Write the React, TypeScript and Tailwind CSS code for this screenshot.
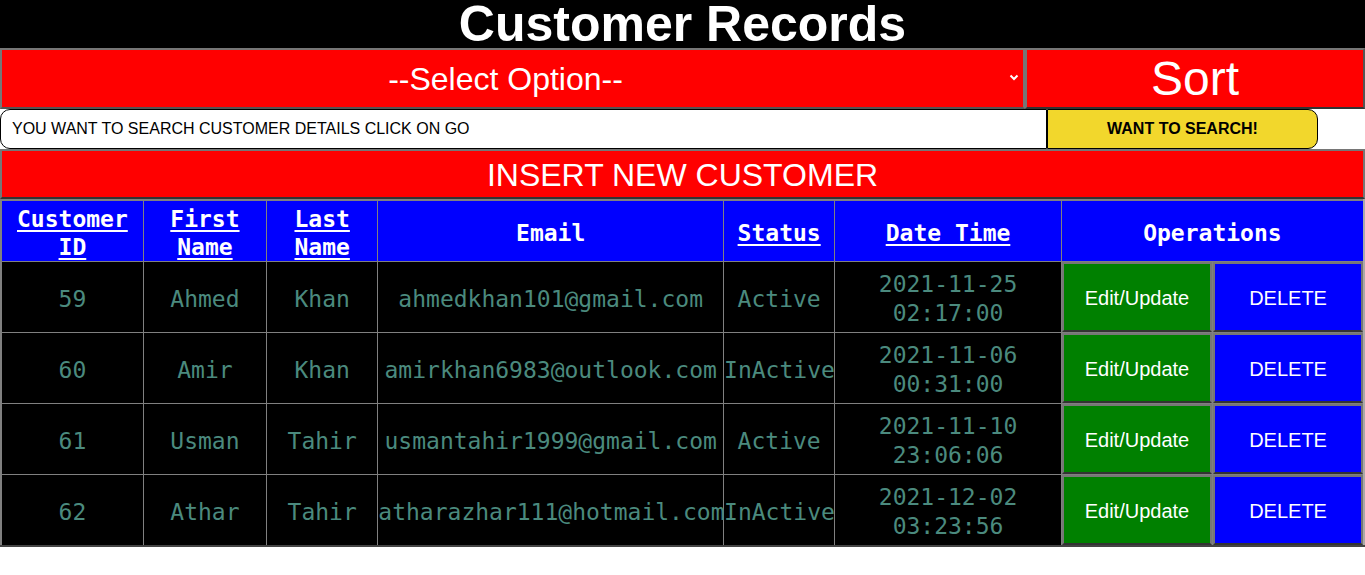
import { useState } from "react";

interface Customer {
  id: number;
  first: string;
  last: string;
  email: string;
  status: string;
  date: string;
  time: string;
}

const customers: Customer[] = [
  { id: 59, first: "Ahmed", last: "Khan", email: "ahmedkhan101@gmail.com", status: "Active", date: "2021-11-25", time: "02:17:00" },
  { id: 60, first: "Amir", last: "Khan", email: "amirkhan6983@outlook.com", status: "InActive", date: "2021-11-06", time: "00:31:00" },
  { id: 61, first: "Usman", last: "Tahir", email: "usmantahir1999@gmail.com", status: "Active", date: "2021-11-10", time: "23:06:06" },
  { id: 62, first: "Athar", last: "Tahir", email: "atharazhar111@hotmail.com", status: "InActive", date: "2021-12-02", time: "03:23:56" },
];

const arial = "font-['Liberation_Sans',Arial,sans-serif]";
const mono = "font-['DejaVu_Sans_Mono','Liberation_Mono',monospace]";

function HeadLink({ children }: { children: React.ReactNode }) {
  return (
    <a href="#" className="underline decoration-2 underline-offset-[3px] text-white">
      {children}
    </a>
  );
}

export default function App() {
  const [sortBy, setSortBy] = useState("");

  return (
    <div className={`${arial} bg-white min-h-[575px]`}>
      <h1 className="bg-black text-white text-center font-bold text-[50px] leading-[48px] h-[48px]">
        Customer Records
      </h1>

      <div className="flex h-[61px]">
        <div className="relative w-[1025px]">
          <select
            value={sortBy}
            onChange={(e) => setSortBy(e.target.value)}
            className="appearance-none w-full h-full bg-[#ff0000] text-white text-[32px] [text-align-last:center] pr-[14px] border-2 border-[#767676] border-b-[#555] outline-none"
          >
            <option value="">--Select Option--</option>
            <option value="id">Customer ID</option>
            <option value="first">First Name</option>
            <option value="last">Last Name</option>
          </select>
          <svg
            className="absolute right-[6px] top-[26px] pointer-events-none"
            width="10"
            height="7"
            viewBox="0 0 10 7"
            fill="none"
            stroke="white"
            strokeWidth="2"
          >
            <path d="M1.5 1.5 L5 5 L8.5 1.5" />
          </svg>
        </div>
        <button className="flex-1 bg-[#ff0000] text-white text-[48px] leading-none border-2 border-[#767676] border-b-[#333] border-r-[#555]">
          Sort
        </button>
      </div>

      <div className="flex h-[40px]">
        <input
          placeholder="YOU WANT TO SEARCH CUSTOMER DETAILS CLICK ON GO"
          className="w-[1047px] h-full border border-black rounded-l-[10px] pl-[11px] text-[16px] placeholder:text-black outline-none"
        />
        <button className="w-[271px] h-full bg-[#f2d72c] border border-black rounded-r-[10px] font-bold text-[16px] text-black">
          WANT TO SEARCH!
        </button>
      </div>

      <button className="block w-full h-[50px] bg-[#ff0000] text-white text-[32px] border-2 border-[#767676] border-b-[#333]">
        INSERT NEW CUSTOMER
      </button>

      <table className={`${mono} w-full table-fixed border-collapse border-2 border-[#808080] border-b-[#444] border-r-[#aaa]`}>
        <colgroup>
          <col className="w-[142px]" />
          <col className="w-[123px]" />
          <col className="w-[111px]" />
          <col className="w-[345px]" />
          <col className="w-[111px]" />
          <col className="w-[226px]" />
          <col className="w-[151px]" />
          <col className="w-[151px]" />
        </colgroup>
        <thead>
          <tr className="h-[60px] bg-[#0000ff] text-white font-bold text-[23px] leading-[28px]">
            <th className="border border-[#808080] pt-[4px]"><HeadLink>Customer<br />ID</HeadLink></th>
            <th className="border border-[#808080] pt-[4px]"><HeadLink>First<br />Name</HeadLink></th>
            <th className="border border-[#808080] pt-[4px]"><HeadLink>Last<br />Name</HeadLink></th>
            <th className="border border-[#808080] pt-[4px]">Email</th>
            <th className="border border-[#808080] pt-[4px]"><HeadLink>Status</HeadLink></th>
            <th className="border border-[#808080] pt-[4px]"><HeadLink>Date Time</HeadLink></th>
            <th colSpan={2} className="border border-[#808080] pt-[4px]">Operations</th>
          </tr>
        </thead>
        <tbody>
          {customers.map((c) => (
            <tr key={c.id} className="h-[71px] bg-black text-[#4b8a7e] text-[23px] leading-[29px] text-center whitespace-nowrap">
              <td className="border border-[#808080] pt-1">{c.id}</td>
              <td className="border border-[#808080] pt-1">{c.first}</td>
              <td className="border border-[#808080] pt-1">{c.last}</td>
              <td className="border border-[#808080] pt-1 overflow-visible">{c.email}</td>
              <td className="border border-[#808080] pt-1">{c.status}</td>
              <td className="border border-[#808080] pt-1">
                {c.date}
                <br />
                {c.time}
              </td>
              <td className="border border-[#808080] p-0">
                <button className={`${arial} w-full h-[70px] bg-[#008000] text-white text-[20px] pt-[2px] border-2 border-[#777] border-b-[#333]`}>
                  Edit/Update
                </button>
              </td>
              <td className="border border-[#808080] p-0">
                <button className={`${arial} w-full h-[70px] bg-[#0000ff] text-white text-[20px] pt-[2px] border-2 border-[#777] border-b-[#333]`}>
                  DELETE
                </button>
              </td>
            </tr>
          ))}
        </tbody>
      </table>
    </div>
  );
}
